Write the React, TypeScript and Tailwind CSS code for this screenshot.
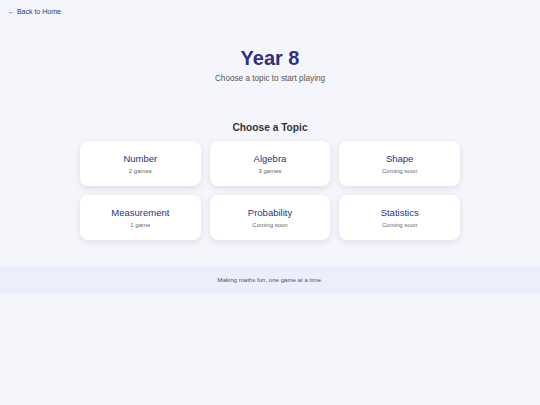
import React from "react"

const topics = [
  { name: "Number", info: "2 games" },
  { name: "Algebra", info: "3 games" },
  { name: "Shape", info: "Coming soon" },
  { name: "Measurement", info: "1 game" },
  { name: "Probability", info: "Coming soon" },
  { name: "Statistics", info: "Coming soon" },
]

export default function App() {
  return (
    <div className="min-h-[405px] bg-[#f5f6fb] font-['Liberation_Sans',Arial,sans-serif]">
      {/* Nav */}
      <div className="px-2 pt-[7px] h-[30px]">
        <a href="#" className="block text-[7px] leading-[10px] text-[#2e3184]">
          ← Back to Home
        </a>
      </div>

      {/* Header */}
      <div className="text-center pt-[16px]">
        <h1 className="text-[20px] leading-[24px] font-bold text-[#2e3184]">Year 8</h1>
        <p className="text-[8.2px] leading-[12px] mt-[3px] text-[#555]">Choose a topic to start playing</p>
      </div>

      {/* Topics */}
      <div className="mt-[36px] text-center">
        <h2 className="text-[10.2px] leading-[14px] font-bold text-[#333]">Choose a Topic</h2>
        <div className="mx-auto mt-[6px] w-[380px] grid grid-cols-3 gap-[9px]">
          {topics.map((t) => (
            <div
              key={t.name}
              className="h-[45px] bg-white rounded-[8px] shadow-[0_2px_6px_rgba(40,40,100,0.12)] flex flex-col items-center justify-center"
            >
              <div className="text-[9.5px] leading-[12px] text-[#2e3184]">{t.name}</div>
              <div className="text-[6px] leading-[8px] mt-[2px] text-[#666]">{t.info}</div>
            </div>
          ))}
        </div>
      </div>

      {/* Footer */}
      <div className="mt-[26px] h-[28px] bg-[#eceefc] flex items-center justify-center">
        <p className="text-[6.1px] text-[#555]">Making maths fun, one game at a time.</p>
      </div>
    </div>
  )
}
